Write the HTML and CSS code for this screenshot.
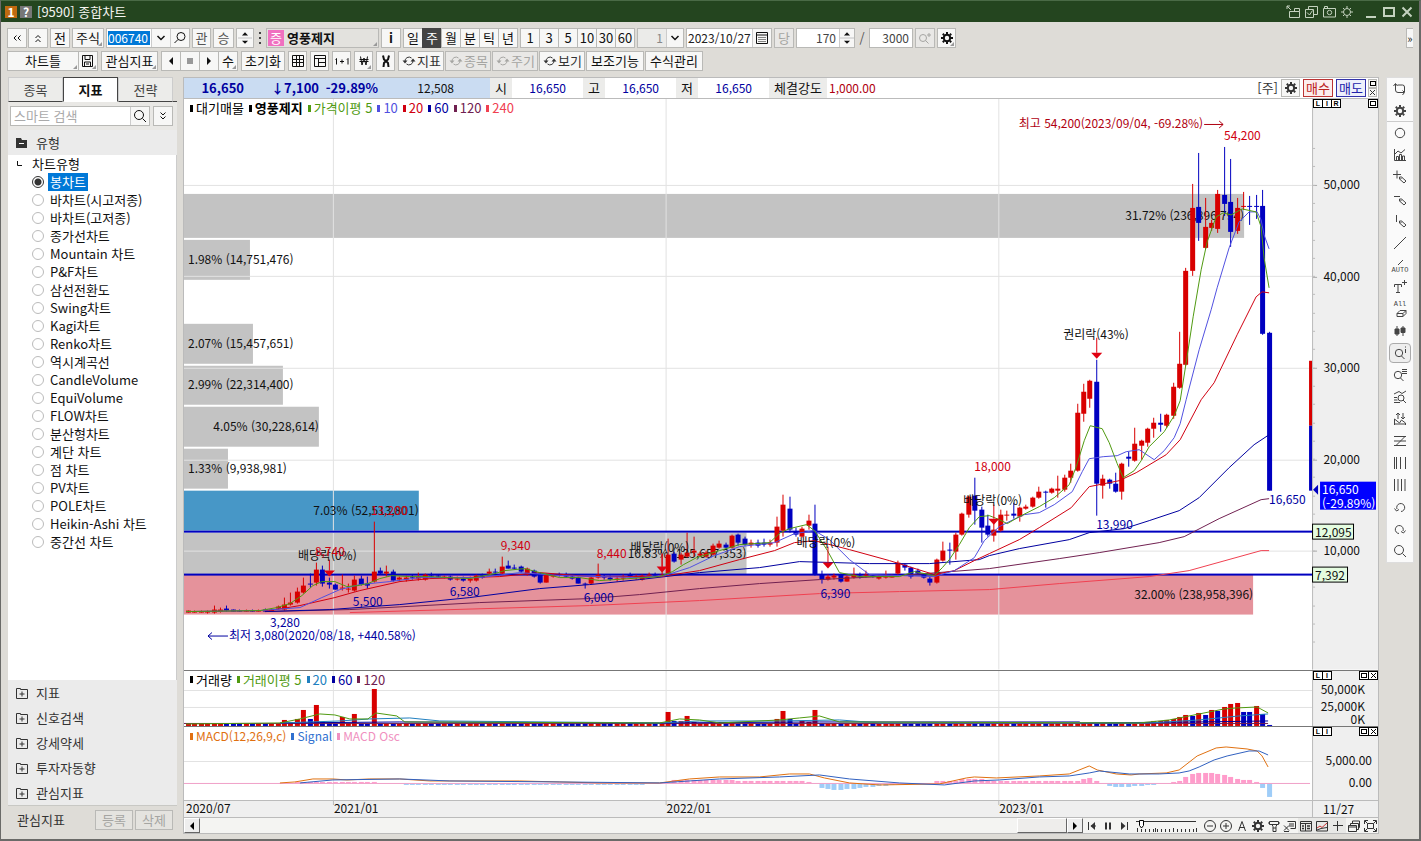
FILE: index.html
```html
<!DOCTYPE html>
<html lang="ko">
<head>
<meta charset="utf-8">
<title>[9590] 종합차트</title>
<link rel="stylesheet" href="styles.css">
</head>
<body>
<svg class="defs" aria-hidden="true">
  <symbol id="gear" viewBox="0 0 16 16"><circle cx="8" cy="8" r="3.2" fill="none" stroke="currentColor" stroke-width="2"/><path d="M8 2v2M8 12v2M2 8h2M12 8h2M3.8 3.8l1.4 1.4M10.8 10.8l1.4 1.4M12.2 3.8l-1.4 1.4M5.2 10.8l-1.4 1.4" stroke="currentColor" stroke-width="2"/></symbol>
  <symbol id="lens" viewBox="0 0 16 16"><circle cx="7" cy="7" r="4.5"/><path d="M10.5 10.5l3.5 3.5"/></symbol>
  <symbol id="lensl" viewBox="0 0 16 16"><circle cx="9" cy="6.5" r="4"/><path d="M6 9.5L2.5 13"/></symbol>
  <symbol id="cycle" viewBox="0 0 16 16"><path d="M4 8.500a4 4 0 0 1 6.500-3.500M12 7.500a4 4 0 0 1-6.500 3.500"/><path d="M1.500 7.500h5l-2.500 3zM9.500 8.500h5l-2.500-3z" fill="currentColor" stroke="none"/></symbol>
  <symbol id="pencil" viewBox="0 0 16 16"><path d="M7.500 8v2l4.500 4 2-2-4.500-4zM8 10.500l2-2"/></symbol>
  <symbol id="down" viewBox="0 0 16 16"><path d="M4.500 6l3.500 3.500L11.500 6" stroke-width="1.500"/></symbol>
  <symbol id="folder" viewBox="0 0 16 16"><path d="M2.500 3.500h4v1h7v9h-11zM8 6.500v5M5.500 9h5"/></symbol>
</svg>
<div class="window">
  <header class="titlebar">
    <span class="badge-one">1</span><span class="badge-help">?</span>
    <h1>[9590] 종합차트</h1>
    <div class="win-tools">
      <button aria-label="분리"><svg viewBox="0 0 16 16"><path d="M2 2l4 4M2 5V2h3M4.500 7.500h10v6h-10zM9.500 7.500v-3h5v3"/></svg></button>
      <button aria-label="확인"><svg viewBox="0 0 16 16"><path d="M2.500 5.500h8v8h-8zM5.500 5V2.500h9v8H11M4 8.500l2.500 2.500 3-4.500"/></svg></button>
      <button aria-label="캡처"><svg viewBox="0 0 16 16"><path d="M2.500 4.500h12v8.500h-12zM3.500 4V2.500h3V4"/><circle cx="8.500" cy="8.500" r="2.200"/></svg></button>
      <button aria-label="설정"><svg viewBox="0 0 16 16"><circle cx="8" cy="8" r="3.500"/><path d="M8 2v2.500M8 11.500V14M2 8h2.500M11.500 8H14M4 4l1.500 1.500M10.500 10.500L12 12M12 4l-1.500 1.500M5.500 10.500L4 12"/></svg></button>
      <button class="wide" aria-label="최소화"><svg viewBox="0 0 16 16"><path d="M3 13h10" stroke-width="2"/></svg></button>
      <button aria-label="최대화"><svg viewBox="0 0 16 16"><path d="M3 4h10v8H3z" stroke-width="2"/></svg></button>
      <button aria-label="닫기"><svg viewBox="0 0 16 16"><path d="M3.500 3.500l9 9M12.500 3.500l-9 9" stroke-width="2"/></svg></button>
    </div>
  </header>

  <div class="toolbars">
    <div class="bar bar-top">
      <div class="pair"><button class="sq" aria-label="이전"><svg viewBox="0 0 16 16"><path d="M7.500 5.500L5 8l2.500 2.500M11.500 5.500L9 8l2.500 2.500"/></svg></button><button class="sq" aria-label="접기"><svg viewBox="0 0 16 16"><path d="M5.500 8L8 5.500 10.500 8M5.500 12L8 9.500l2.500 2.500"/></svg></button></div>
      <button class="sq">전</button>
      <button class="w32 drop">주식</button>
      <div class="field code"><input aria-label="종목코드" value="006740"><button class="in19"><svg viewBox="0 0 16 16"><use href="#down"/></svg></button><button class="in19"><svg viewBox="0 0 16 16"><use href="#lensl"/></svg></button></div>
      <button class="w19 dim">관</button>
      <button class="w21 dim">승</button>
      <button class="spin bordered" aria-label="증감"><svg viewBox="0 0 16 20"><path d="M4.500 7L8 3.500 11.500 7zM4.500 13L8 16.500 11.500 13z" fill="currentColor" stroke="none"/><path d="M0 10h16" stroke="#bbb"/></svg></button>
      <span class="dots" aria-hidden="true"><i></i><i></i><i></i></span>
      <button class="stock drop"><em>증</em><b>영풍제지</b></button>
      <button class="sq"><b>i</b></button>
      <div class="seg"><button>일</button><button class="on">주</button><button>월</button><button>분</button><button>틱</button><button>년</button></div>
      <div class="seg"><button>1</button><button>3</button><button>5</button><button>10</button><button>30</button><button>60</button></div>
      <div class="field unit"><input aria-label="주기" value="1"><button class="in17"><svg viewBox="0 0 16 16"><use href="#down"/></svg></button></div>
      <div class="field date"><input aria-label="날짜" value="2023/10/27"><button class="in19"><svg viewBox="0 0 16 16"><path d="M2.500 2.500h11v11h-11zM2.500 5h11"/><path d="M4.500 7.500h7M4.500 9.500h7M4.500 11.500h7" stroke-dasharray="1 1"/></svg></button></div>
      <button class="sq off">당</button>
      <div class="field count"><input aria-label="표시 개수" value="170"><button class="spin"><svg viewBox="0 0 16 20"><path d="M4.500 7L8 3.500 11.500 7zM4.500 13L8 16.500 11.500 13z" fill="currentColor" stroke="none"/><path d="M0 10h16" stroke="#bbb"/></svg></button></div>
      <span class="slash">/</span>
      <div class="field total"><input aria-label="전체 개수" value="3000"></div>
      <button class="sq off"><svg viewBox="0 0 16 16"><circle cx="6" cy="8" r="3.500"/><path d="M8.500 10.500l3 3M12 3v4M10 5h4"/></svg></button>
      <button class="w19 drop"><svg viewBox="0 0 16 16"><use href="#gear"/></svg></button>
      <button class="more">»</button>
    </div>
    <div class="bar bar-sub">
      <div class="seg"><button class="w72 drop">차트틀</button><button class="w19 drop"><svg viewBox="0 0 16 16"><path d="M2.500 2.500h10v11h-10zM5 2.500v4h5v-4M4.500 13v-4h6v4M6 11h3"/></svg></button></div>
      <button class="w57 drop">관심지표</button>
      <div class="seg flat"><button><svg viewBox="0 0 16 16"><path d="M10 4v8L6 8z" fill="currentColor" stroke="none"/></svg></button><button><svg viewBox="0 0 16 16"><path d="M5 5h6v6H5z" fill="#999" stroke="none"/></svg></button><button><svg viewBox="0 0 16 16"><path d="M6 4v8l4-4z" fill="currentColor" stroke="none"/></svg></button><button class="drop">수</button></div>
      <button class="w44">초기화</button>
      <button class="w19"><svg viewBox="0 0 16 16"><path d="M2.500 2.500h11v11h-11zM2.500 6.500h11M2.500 9.500h11M6.500 2.500v11M9.500 2.500v11"/></svg></button>
      <button class="w19"><svg viewBox="0 0 16 16"><path d="M2.500 2.500h11v11h-11zM2.500 5.500h11M6.500 5.500v8M6.500 9.500h7"/></svg></button>
      <button class="w19"><svg viewBox="0 0 16 16"><path d="M1.500 6.500l1-1v6M13 6.500l1-1v6M8 6.500v4M6 8.500h4"/></svg></button>
      <button class="w19 drop"><svg viewBox="0 0 16 16"><path d="M4.500 3.500L6 12l2-7 2 7 1.500-8.500M3.500 6.500h9M3.500 8.500h9"/></svg></button>
      <button class="w19"><svg viewBox="0 0 16 16"><path d="M5 2.500l1 4 2 1.500 2-1.500 1-4M5.500 14l.5-4 2-2 2 2 .5 4" stroke-width="2"/></svg></button>
      <div class="pair">
        <button class="w46"><svg viewBox="0 0 16 16"><use href="#cycle"/></svg>지표</button>
        <button class="w46 off"><svg viewBox="0 0 16 16"><use href="#cycle"/></svg>종목</button>
        <button class="w46 off"><svg viewBox="0 0 16 16"><use href="#cycle"/></svg>주기</button>
        <button class="w46"><svg viewBox="0 0 16 16"><use href="#cycle"/></svg>보기</button>
        <button class="w58">보조기능</button>
        <button class="w58">수식관리</button>
      </div>
    </div>
  </div>

  <main class="work">
    <aside class="side">
      <nav class="tabs"><button>종목</button><button class="active">지표</button><button>전략</button><span></span></nav>
      <div class="search">
        <div class="field find"><input aria-label="스마트 검색" placeholder="스마트 검색"><button class="in19"><svg viewBox="0 0 16 16"><use href="#lens"/></svg></button></div>
        <button class="sq" aria-label="펼치기"><svg viewBox="0 0 16 16"><path d="M5.500 4.500L8 7l2.500-2.500M5.500 8.500L8 11l2.500-2.500"/></svg></button>
      </div>
      <h2 class="group"><svg viewBox="0 0 16 16"><path d="M2 3h5l1 2h5v8H2z" fill="#333" stroke="none"/><path d="M5 8.500h5" stroke="#fff"/></svg>유형</h2>
      <div class="tree">
        <h3><svg viewBox="0 0 16 16"><path d="M8.500 5v4.500H13"/></svg>차트유형</h3>
        <div id="types" class="types"></div>
      </div>
      <div class="groups">
        <h2><svg viewBox="0 0 16 16"><use href="#folder"/></svg>지표</h2>
        <h2><svg viewBox="0 0 16 16"><use href="#folder"/></svg>신호검색</h2>
        <h2><svg viewBox="0 0 16 16"><use href="#folder"/></svg>강세약세</h2>
        <h2><svg viewBox="0 0 16 16"><use href="#folder"/></svg>투자자동향</h2>
        <h2><svg viewBox="0 0 16 16"><use href="#folder"/></svg>관심지표</h2>
      </div>
      <footer><span>관심지표</span><button class="off">등록</button><button class="off">삭제</button></footer>
    </aside>

    <section class="panel">
      <div class="quote">
        <div class="now"><b>16,650</b><b class="c2">↓7,100</b><b class="c3">-29.89%</b><span class="c4">12,508</span></div>
        <span class="k">시</span><span class="v">16,650</span>
        <span class="k">고</span><span class="v">16,650</span>
        <span class="k">저</span><span class="v">16,650</span>
        <span class="k k4">체결강도</span><span class="r">1,000.00</span>
        <div class="trade"><span>[주]</span><button class="w19 set-btn"><svg viewBox="0 0 16 16"><use href="#gear"/></svg></button><button class="buy">매수</button><button class="sell">매도</button><span class="mini2"><button aria-label="확대"><i class="box"></i></button><button aria-label="닫기"><svg viewBox="0 0 7 7"><path d="M1 1l5 5M6 1L1 6"/></svg></button></span></div>
      </div>

      <div class="pane">
        <svg id="price" viewBox="184 99 1195 571"></svg>
        <div class="legend"><span style="--c:#000">대기매물</span><span style="--c:#000"><b>영풍제지</b></span><span style="--c:#4f9a10">가격이평 5</span><span style="--c:#5050e0">10</span><span style="--c:#d00010">20</span><span style="--c:#0000a0">60</span><span style="--c:#702050">120</span><span style="--c:#f04050">240</span></div>
        <div class="tags"><button>L</button><button>I</button><button>R</button></div>
        <div class="tags end"><button aria-label="확대"><i class="box"></i></button></div>
      </div>
      <div class="pane">
        <svg id="volume" viewBox="184 671 1195 56"></svg>
        <div class="legend"><span style="--c:#000">거래량</span><span style="--c:#4f9a10">거래이평 5</span><span style="--c:#2080c0">20</span><span style="--c:#0000a0">60</span><span style="--c:#702050">120</span></div>
        <div class="tags"><button>L</button><button>I</button></div>
        <div class="tags end"><button aria-label="확대"><i class="box"></i></button><button aria-label="닫기"><svg viewBox="0 0 7 7"><path d="M1 1l5 5M6 1L1 6"/></svg></button></div>
      </div>
      <div class="pane light">
        <svg id="macd" viewBox="184 728 1195 73"></svg>
        <div class="legend small"><span style="--c:#e07010">MACD(12,26,9,c)</span><span style="--c:#3070d0">Signal</span><span style="--c:#f090c0">MACD Osc</span></div>
        <div class="tags"><button>L</button><button>I</button></div>
        <div class="tags end"><button aria-label="확대"><i class="box"></i></button><button aria-label="닫기"><svg viewBox="0 0 7 7"><path d="M1 1l5 5M6 1L1 6"/></svg></button></div>
      </div>
      <div class="pane light"><svg id="dates" viewBox="184 802 1195 16"></svg></div>

      <div class="bottom">
        <div class="scroll"><button aria-label="왼쪽"><svg viewBox="0 0 16 16"><path d="M10 4v8L6 8z" fill="currentColor" stroke="none"/></svg></button><span class="track"><span class="thumb"></span></span><button aria-label="오른쪽"><svg viewBox="0 0 16 16"><path d="M6 4v8l4-4z" fill="currentColor" stroke="none"/></svg></button></div>
        <div class="player">
          <button><svg viewBox="0 0 16 16"><path d="M4.500 4v8M7 8h5"/><path d="M11 4v8L6.500 8z" fill="currentColor" stroke="none"/></svg></button>
          <button><svg viewBox="0 0 16 16"><path d="M6 4.500v7M10 4.500v7" stroke-width="2"/></svg></button>
          <button><svg viewBox="0 0 16 16"><path d="M11.500 4v8"/><path d="M5 4v8l4.500-4z" fill="currentColor" stroke="none"/></svg></button>
        </div>
        <svg class="slider" viewBox="0 0 62 14"><path d="M0 3.500h60"/><path d="M1 12.500h60" stroke-dasharray="1 3" stroke-width="3"/><path d="M1.500 10v4M19.500 10v4M37.500 10v4M60.500 10v4"/><path d="M3.500 2.500h4v5l-2 2.500-2-2.500z" fill="#fff" stroke="#000"/></svg>
        <div class="zoomers">
          <button><svg viewBox="0 0 16 16"><circle cx="8" cy="8" r="5.500"/><path d="M5 8h6"/></svg></button>
          <button><svg viewBox="0 0 16 16"><circle cx="8" cy="8" r="5.500"/><path d="M5 8h6M8 5v6"/></svg></button>
          <button><svg viewBox="0 0 16 16"><path d="M4.500 13L8 3.500 11.500 13M5.500 9.500h5"/></svg></button>
          <button><svg viewBox="0 0 16 16"><use href="#gear"/></svg></button>
          <button><svg viewBox="0 0 16 16"><path d="M3.500 3.500h9v3h-9zM3.500 5H2M12.500 5H14M6 6.500l1 2v5h3v-5l1-2M7 10h3"/></svg></button>
          <button><svg viewBox="0 0 16 16"><path d="M5.500 3.500h8v7h-5M7 6h5M7 8h5M2 7.500l5 5M7 7.500l-5 5M2 13.500h5"/></svg></button>
          <button class="set"><svg viewBox="0 0 16 16"><path d="M2.500 3.500h11v9.500h-11zM2.500 5.500h11M7.500 5.500V13"/><path d="M4 8h2M4 10.500h2M9 8h3M9 10.500h3" stroke-width="1.500"/></svg></button>
          <button class="set"><svg viewBox="0 0 16 16"><path d="M2.500 3.500h11v9.500h-11z"/><path d="M3 10l3-2 2 1.500 5-4.500" stroke="#c33"/><path d="M3 12l4-1.500 6-1" /></svg></button>
          <button class="set"><svg viewBox="0 0 16 16"><path d="M7.500 3v10M3 7.500h10"/></svg></button>
          <button><svg viewBox="0 0 16 16"><path d="M2.500 7.500h8v6h-8zM2.500 9h8M4.500 7V5.500h8v6H11M6.500 5V3h7v6.500h-1"/></svg></button>
          <button><svg viewBox="0 0 16 16"><path d="M5.500 5.500h6v5h-6zM2.500 6V2.500H6M11 2.500h3.500V6M14.500 10v3.500H11M6 13.500H2.500V10M3 3l2.500 2.500M14 3l-2.500 2.500M3 13l2.500-2.500M14 13l-2.500-2.500"/></svg></button>
        </div>
      </div>
    </section>

    <nav class="tools" aria-label="그리기 도구">
      <button><svg viewBox="0 0 16 16"><path d="M3.500 3v6q0 2.500 2.500 2.500h6M1.500 5l2-2.500 2 2.500M10.500 9.500l2 2-2 2.500M5.500 4h5q2 0 2 2v5"/></svg></button>
      <button class="last"><svg viewBox="0 0 16 16"><use href="#gear"/></svg></button>
      <button><svg viewBox="0 0 16 16"><circle cx="8" cy="8" r="4.700"/></svg></button>
      <button><svg viewBox="0 0 16 16"><path d="M2.500 2v11.500H14M4.500 13V9.500h2V13M7.500 13V7.500h2V13M10.500 13V9h2v4M3 7l3-3 3 2 4-3.500"/></svg></button>
      <button><svg viewBox="0 0 16 16"><path d="M5 1.500v8M1 5.500h8"/><use href="#pencil"/></svg></button>
      <button><svg viewBox="0 0 16 16"><path d="M2 5.500h6"/><use href="#pencil"/></svg></button>
      <button><svg viewBox="0 0 16 16"><path d="M4.500 2v7"/><use href="#pencil"/></svg></button>
      <button><svg viewBox="0 0 16 16"><path d="M2 14L14 2"/></svg></button>
      <button class="lbl"><svg viewBox="0 0 16 10"><path d="M6 9l5-5"/></svg><span>AUTO</span></button>
      <button><svg viewBox="0 0 16 16"><path d="M2.500 8V5.500h7V8M6 5.500v8M4 13.500h4M12.500 1v5M10 3.500h5"/></svg></button>
      <button class="lbl all"><span>All</span><svg viewBox="0 0 16 10"><path d="M5 5.500h6v3H5zM5 5.500l3-3h6l-3 3M14 2.500v3l-3 3"/></svg></button>
      <button><svg viewBox="0 0 16 16"><path d="M5 3v10M11 3v10"/><path d="M3 6h4v5H3zM9 5h4v4.500H9z" fill="currentColor"/></svg></button>
      <button class="pressed"><svg viewBox="0 0 16 16"><circle cx="7" cy="8" r="3.700"/><path d="M9.500 11l3 3M13.500 1.500v1M13.500 4v4"/></svg></button>
      <button><svg viewBox="0 0 16 16"><circle cx="6" cy="8" r="3.700"/><path d="M8.500 11l3 3M10 2.500h5M10 4.500h5M10 6.500h5"/></svg></button>
      <button><svg viewBox="0 0 16 16"><circle cx="9" cy="9" r="3"/><path d="M11 11l3 3M2 5l5-2.500 3 2 4-2.500M2 8.500h3M2 11h3.500M2 13.500h6"/></svg></button>
      <button><svg viewBox="0 0 16 16"><path d="M2.500 14V8l5 4 2-3 4 3v2M6 8V2M4 4l2-2 2 2M11 2v6M9 6l2 2 2-2M3 13h11"/></svg></button>
      <button><svg viewBox="0 0 16 16"><path d="M2 3.500h12M2 8h12M2 12.500h12M13 3.500L4 12.500"/></svg></button>
      <button><svg viewBox="0 0 16 16"><path d="M2.500 2v12M4.500 2v12M8.500 2v12M13.500 2v12"/></svg></button>
      <button><svg viewBox="0 0 16 16"><path d="M2.500 2v12M6 2v12M9.500 2v12M13 2v12"/></svg></button>
      <button><svg viewBox="0 0 16 16"><path d="M5 10a4 4 0 1 1 4 2.500M2.500 9.500l2 2.500 2.500-1.500"/></svg></button>
      <button><svg viewBox="0 0 16 16"><path d="M11 10a4 4 0 1 0-4 2.500M13.500 9.500l-2 2.500-2.500-1.500"/></svg></button>
      <button><svg viewBox="0 0 16 16"><use href="#lens"/></svg></button>
    </nav>
  </main>
</div>
<script src="chart.js"></script>
</body>
</html>
```

FILE: styles.css
```css
* { box-sizing: border-box; }
body {
  margin: 0;
  font: 13px/18px "Noto Sans CJK KR", sans-serif;
  color: #111;
  background: #dedcd7;
}
button, input { font: inherit; color: inherit; margin: 0; padding: 0; border-radius: 0; }
button { background: #f7f7f6; border: 1px solid #b9b9b6; display: inline-flex; align-items: center; justify-content: center; white-space: nowrap; position: relative; line-height: 16px; }
h1, h2, h3 { margin: 0; font: inherit; }
svg { display: block; fill: none; stroke: currentColor; }
svg text { stroke: none; font-size: 12px; }
button svg, h2 svg, h3 svg { width: 16px; height: 16px; flex: none; }
.defs { position: absolute; width: 0; height: 0; }

.window { min-height: 100vh; display: flex; flex-direction: column; border: 1px solid #6a6a68; border-top-color: #4a6a46; border-right-width: 2px; border-bottom-width: 2px; }
.titlebar { height: 21px; background: #24451f; color: #fff; display: flex; align-items: center; padding: 0 4px; gap: 3px; flex: none; }
.titlebar h1 { color: #f4f4f0; margin-left: 2px; }
.badge-one, .badge-help { width: 12px; height: 12px; line-height: 12px; text-align: center; background: #c06a10; font-weight: bold; font-size: 12px; }
.badge-help { background: #777; }
.win-tools { margin-left: auto; display: flex; gap: 2px; color: #c4d2bf; }
.win-tools button { background: none; border: 0; width: 16px; height: 16px; }
.win-tools .wide { margin-left: 6px; }

.toolbars { padding: 6px 6px 0; display: flex; flex-direction: column; gap: 3px; flex: none; }
.bar { display: flex; align-items: center; height: 20px; }
.bar-top { gap: 2px; }
.bar-sub { gap: 3px; }
.bar button { height: 20px; }
.pair { display: flex; gap: 1px; }
.sq { width: 20px; height: 20px; }
.w19 { width: 19px; } .w21 { width: 21px; } .w32 { width: 32px; } .w44 { width: 44px; }
.w46 { width: 46px; } .w57 { width: 57px; } .w58 { width: 58px; } .w72 { width: 72px; }
.w46 { color: #333; }
.dim { color: #555; }
.off { color: #a5a5a2; background: #e9e8e6; }
.drop::after { content: ""; position: absolute; right: 1px; bottom: 1px; border: 2px solid transparent; border-right-color: #999; border-bottom-color: #999; }
.field { display: flex; border: 1px solid #b9b9b6; height: 20px; background: #fff; }
.field input { border: 0; flex: 1; min-width: 0; background: none; padding: 0 3px; outline: 0; text-align: right; color: #444; font-size: 12px; }
.field button, .bar .field button { border: 0; border-left: 1px solid #ccc; height: 18px; flex: none; }
.in19 { width: 19px; } .in17 { width: 17px; } .spin { width: 15px; }
.spin svg { width: 14px; height: 18px; }
.bordered { width: 18px; }
.code { width: 84px; }
.code input { background: #0078d7; color: #fff; text-align: left; margin: 2px 1px; padding: 0; }
.unit { width: 47px; } .unit input { background: #ebebe9; color: #888; }
.date { width: 86px; } .date input { text-align: left; color: #222; padding: 0 0 0 1px; }
.count { width: 59px; } .total { width: 44px; }
.slash { width: 10px; text-align: center; color: #555; }
.dots { width: 8px; display: flex; flex-direction: column; gap: 3px; align-items: center; }
.dots i { width: 2px; height: 2px; background: #444; }
.stock { width: 113px; justify-content: flex-start; gap: 3px; background: #e3e2de; padding-left: 1px; }
.stock em { font-style: normal; background: #f070c0; color: #fff; width: 16px; line-height: 16px; }
.more { width: 7px; margin-left: auto; border-right: 0; font-size: 11px; }
.seg { display: flex; }
.seg button { width: 20px; margin-right: -1px; }
.seg button:last-child { margin-right: 0; }
.seg .w72 { width: 72px; }
.seg .on { background: #444; color: #fff; border-color: #444; }

.work { flex: 1; display: flex; padding: 6px 5px 5px 7px; min-height: 0; align-items: stretch; }
.side { width: 169px; flex: none; margin-right: 6px; display: flex; flex-direction: column; }
.tabs { display: flex; height: 25px; }
.tabs button { width: 55px; border: 1px solid #ccc; border-bottom-color: #444; background: #ececea; color: #444; }
.tabs .active { background: #fff; border-color: #444; border-bottom-color: #fff; color: #111; font-weight: bold; }
.tabs span { flex: 1; border-bottom: 1px solid #444; }
.search { display: flex; gap: 3px; padding: 4px 2px; background: #e9e8e5; }
.find { flex: 1; min-width: 0; } .find input { text-align: left; font-size: 13px; } .find input::placeholder { color: #aaa; }
.search .sq { margin-right: 2px; flex: none; }
.group, .groups h2 { display: flex; align-items: center; gap: 6px; height: 25px; padding-left: 6px; background: #ebebeb; color: #333; }
.tree { background: #fff; flex: 1; border-right: 1px solid #ccc; }
.tree h3 { display: flex; align-items: center; height: 18px; gap: 7px; padding-left: 1px; }
.types { display: flex; flex-direction: column; }
.types label { display: flex; align-items: center; height: 18px; padding-left: 24px; gap: 4px; }
.types input { appearance: none; width: 12px; height: 12px; border: 1px solid #bbb; border-radius: 50%; background: #fff; }
.types input:checked { border-color: #333; background: radial-gradient(#333 0 3px, #fff 4px); }
.types span { padding: 0 2px; line-height: 18px; }
.types input:checked + span { background: #0078d7; color: #fff; }
.side footer { height: 29px; display: flex; align-items: center; gap: 2px; padding: 0 4px 0 9px; background: #dedcd7; border-top: 1px solid #c8c8c4; color: #333; }
.side footer span { flex: 1; }
.side footer button { width: 38px; height: 20px; background: #e4e3df; }

.panel { flex: 1; min-width: 0; border: 1px solid #bbb; margin-right: 7px; background: #fff; display: flex; flex-direction: column; }
.quote { height: 21px; display: flex; align-items: stretch; line-height: 20px; border-bottom: 1px solid #bbb; color: #0000a0; flex: none; }
.now { display: flex; width: 306px; background: #cadcf2; text-align: right; }
.now b { width: 60px; } .now .c2 { width: 75px; } .now .c3 { width: 59px; } .now .c4 { width: 76px; color: #111; }
.c4, .v, .r { font-size: 12px; }
.k { width: 22px; background: #ececea; color: #111; text-align: center; }
.k4 { width: 58px; }
.v { width: 71px; padding-right: 17px; text-align: right; }
.r { color: #b00010; padding-left: 2px; }
.trade { margin-left: auto; display: flex; gap: 2px; align-items: center; color: #333; padding-right: 1px; }
.trade .set-btn, .trade .buy, .trade .sell { height: 18px; margin-left: 1px; }
.trade .buy, .trade .sell { width: 30px; border-color: #b33; color: #b22; background: #fceeee; }
.trade .sell { border-color: #33a; color: #22a; background: #eef0fc; }
.mini2 { display: flex; flex-direction: column; }
.mini2 button { width: 9px; height: 9px; }
.mini2 svg, .tags svg { width: 7px; height: 7px; }

.pane { position: relative; border-bottom: 1px solid #777; }
.light { border-color: #bbb; }
.pane > svg { width: 100%; height: auto; }
.legend { position: absolute; left: 6px; top: 0; display: flex; gap: 5px; }
.legend span { color: var(--c); display: flex; align-items: center; gap: 3px; }
.legend span::before { content: ""; width: 3px; height: 7px; background: var(--c); }
.small { font-size: 12px; }
.tags { position: absolute; right: 36px; top: 0; display: flex; width: 29px; color: #000; }
.tags.end { right: 0; width: auto; }
.tags button { width: 10px; height: 9px; border: 1px solid #000; background: #fff; font: bold 7px/7px "Liberation Sans", sans-serif; margin-right: -1px; }
.tags.end button:last-child { margin-right: 0; }
.box { width: 6px; height: 5px; border: 1px solid #000; }

.bottom { display: flex; height: 15px; background: #f4f4f2; color: #333; overflow: hidden; }
.bottom button { height: 15px; width: 16px; }
.scroll { flex: 1; display: flex; }
.scroll button { background: #eee; border-color: #fff #666 #666 #fff; color: #000; }
.track { flex: 1; display: flex; justify-content: flex-end; }
.thumb { width: 50px; background: #eeedeb; border: 1px solid; border-color: #fff #666 #666 #fff; }
.player, .zoomers { display: flex; }
.player button, .zoomers button { border: 0; background: none; }
.zoomers .set { background: #e8e8e6; }
.player { padding-left: 1px; }
.slider { width: 62px; height: 14px; margin: 0 4px; }

.tools { width: 28px; flex: none; align-self: flex-start; display: flex; flex-direction: column; background: #fafafa; border: 1px solid #ddd; color: #444; }
.tools button { border: 0; background: none; height: 22px; }
.tools .last { border-bottom: 1px solid #ccc; }
.tools .pressed { border: 1px solid #aaa; border-radius: 4px; background: #eee; margin: 1px 2px; height: 20px; }
.tools .lbl { flex-direction: column; font: 7px/8px "Liberation Mono", monospace; }
.tools .lbl svg { height: 10px; }
```

FILE: chart.js
```js
// Chart-type radio list
const types = ["봉차트", "바차트(시고저종)", "바차트(고저종)", "종가선차트", "Mountain 차트", "P&F차트", "삼선전환도", "Swing차트", "Kagi차트", "Renko차트", "역시계곡선", "CandleVolume", "EquiVolume", "FLOW차트", "분산형차트", "계단 차트", "점 차트", "PV차트", "POLE차트", "Heikin-Ashi 차트", "중간선 차트"];
const list = document.getElementById("types");
types.forEach((name, i) => {
  const label = document.createElement("label");
  const radio = document.createElement("input");
  radio.type = "radio";
  radio.name = "type";
  radio.checked = i === 0;
  const text = document.createElement("span");
  text.textContent = name;
  label.append(radio, text);
  list.append(label);
});

const RED = "#d80000", BLUE = "#0000c0", GRID = "#e2e2e2";
const X0 = 188, STEP = 6.4, EDGE = 1313;
const xs = i => Math.round(X0 + STEP * i);
const rect = (x, y, w, h, f) => `<rect x="${x}" y="${y}" width="${w}" height="${h}" fill="${f}" stroke="none"/>`;
const line = (pts, c, w = 1) => `<polyline points="${pts}" stroke="${c}" stroke-width="${w}"/>`;
const text = (x, y, s, c = "#111", anchor = "start") => `<text x="${x}" y="${y}" fill="${c}" text-anchor="${anchor}">${s}</text>`;
const axis = (y, h) => rect(EDGE, y, 67, h, "#efefef") + rect(EDGE, y, 1, h, "#bbb");
const verticals = (y, h) => [333, 666, 999].map(x => rect(x, y, 1, h, GRID)).join("");

// color, high, body top, body bottom, low
const candles = `r611,611,613,613 r611,612,613,613 r611,612,613,613 r611,612,613,614 r606,610,613,614 r608,610,612,613 b606,609,611,612 b610,610,612,612 b610,611,612,612 r610,611,612,612 b610,611,612,612 r610,611,612,612 b609,610,612,612 r609,610,612,612 r606,607,609,610
r598,605,610,611 r593,603,605,606 r588,592,603,604 r578,586,593,594 b574,584,585,588 r563,570,583,586 b566,570,584,587 b578,583,585,589 b584,585,590,590 r575,588,589,591 r584,589,590,593 r576,580,591,592 b576,579,585,586 b577,584,586,589 r522,572,582,583 b568,571,574,575 r566,572,574,577 b570,572,581,582
r577,578,580,582 r576,578,580,582 b575,577,578,580 r573,577,579,581 r574,575,580,581 b573,576,577,578 b575,576,577,578 r576,577,578,579 b576,577,580,581 r577,579,580,581 b577,579,581,582 r577,579,581,583 r575,576,581,582 b574,576,578,579 r569,572,574,575 b569,572,573,576 r557,567,574,575 b561,566,569,569 b565,568,569,570 b566,567,572,573
r568,569,575,576 b570,571,577,578 b573,574,583,584 r574,575,583,583 r574,575,577,578 b573,575,576,577 b573,575,577,578 b575,577,579,580 b577,578,584,584 b583,584,585,589 r577,578,584,585 r564,575,578,579 b575,577,578,580 b576,578,580,581 r577,579,580,582 r575,578,579,581 b573,575,577,578 r575,577,578,580 r575,576,580,581 r573,575,576,578 b573,575,576,577 r554,575,576,577
r539,555,574,575 b552,554,562,563 r553,555,560,565 r533,553,557,558 r537,551,553,557 r552,554,556,557 r551,553,557,558 r544,546,555,556 r541,544,548,549 b543,545,548,549 r535,536,548,549 b534,535,543,546 b537,539,545,546 r540,543,545,548 b540,543,546,548 b539,543,545,547 r540,543,545,547
r517,527,543,547 r495,505,531,537 b497,509,530,533 b528,532,535,537 r527,529,537,538 r515,521,526,530 b505,524,575,576 b571,575,580,584 r575,577,580,581 r574,576,578,580 b574,575,582,583 r576,577,582,582 r568,575,578,579 b573,576,577,579 r571,575,576,578 b575,576,577,578 r576,577,579,580 r571,577,578,579 r575,576,578,578 r561,563,574,575
b564,565,568,571 b567,568,577,579 b569,571,574,575 b574,575,578,579 b577,579,583,586 r559,560,583,584 r542,551,561,562 b543,550,551,565 r533,535,552,560 r513,514,535,536 r496,497,515,518 b478,496,511,525 b507,510,528,543 b515,526,535,537 r520,530,536,542 r510,515,531,532 r511,515,516,521 b503,514,516,519 r507,508,517,522 r505,507,509,510 r497,498,507,508
r487,492,498,499 b491,492,493,508 r488,489,493,494 r476,489,491,498 r475,478,490,492 r464,471,478,483 r404,413,471,472 r384,392,414,422 r380,381,399,408 b360,382,484,516 r475,479,486,499 b479,480,484,489 b473,484,492,493 r463,464,492,500 b452,457,459,467 r428,444,461,462 r440,441,446,460 r428,429,443,447 r418,423,429,438 b414,423,425,432
r414,415,426,428 r383,387,416,419 r332,364,388,389 r268,271,365,366 r184,208,271,276 b153,207,223,241 r198,227,248,249 r220,223,228,231 r190,194,229,233 b147,195,204,216 b159,202,232,247 r198,208,231,234 r192,206,207,210 b196,206,207,225 b195,206,207,219 b190,206,334,335 b332,333,491,491`
  .split(/\s+/).map(s => ({ up: s[0] === "r", v: s.slice(1).split(",").map(Number) }));

const bands = [
  [194, 44, 1245, "31.72% (236,896,794)"], [240, 40, 250, "1.98% (14,751,476)"], [324, 40, 253, "2.07% (15,457,651)"],
  [366, 39, 283, "2.99% (22,314,400)"], [407, 40, 319, "4.05% (30,228,614)"], [449, 40, 228, "1.33% (9,938,981)"],
  [491, 40, 419, "7.03% (52,513,801)", "#4797c7"], [533, 42, 747, "16.83% (125,657,353)"], [575, 40, 1254, "32.00% (238,958,396)", "#e5929b"]
];

const averages = [
  ["#f04050", "350,613 590,606 700,601 820,594 900,592 990,590 1060,584 1150,577 1190,571 1262,551 1270,551"],
  ["#702050", "265,612 350,610 480,603 590,599 640,595 700,589 760,584 820,580 900,576 990,569 1060,559 1100,553 1160,543 1185,537 1220,519 1262,500 1270,499"],
  ["#0000a0", "265,612 330,610 400,605 470,598 540,589 590,585 640,580 700,573 760,568 800,562 870,564 930,564 980,560 990,556 1020,549 1070,540 1090,533 1125,529 1150,521 1180,511 1200,498 1230,468 1255,445 1270,435"],
  ["#d00010", "186,612 270,611 300,606 335,598 360,591 400,582 430,579 500,577 540,573 590,577 660,577 700,571 740,560 775,551 795,543 815,541 850,550 890,561 935,575 955,571 975,561 990,554 1020,540 1040,528 1072,508 1090,487 1120,481 1137,473 1167,455 1181,440 1202,400 1215,383 1238,335 1257,297 1263,292 1270,293"],
  ["#5050e0", "186,612 260,611 300,608 322,598 340,590 360,585 390,582 420,578 480,578 520,573 560,576 640,578 665,576 690,568 715,556 740,547 775,543 795,534 815,531 830,540 850,560 870,575 935,577 955,571 975,558 985,541 1000,527 1014,520 1025,515 1040,513 1055,505 1073,492 1083,472 1090,459 1104,457 1118,456 1127,452 1140,450 1155,460 1165,451 1175,438 1181,424 1187,400 1200,350 1212,310 1218,288 1230,248 1240,222 1250,212 1258,212 1262,220 1265,235 1270,249"],
  ["#4f9a10", "186,612 260,611 277,608 290,604 302,596 313,586 322,582 335,582 347,587 358,586 368,584 380,579 392,576 410,577 430,577 470,579 495,574 505,571 525,569 540,573 560,578 580,578 600,581 660,577 673,572 684,565 697,558 720,551 740,545 770,543 781,533 790,529 807,525 815,531 828,551 840,573 860,577 900,577 915,572 935,576 943,568 950,560 960,545 970,528 980,517 990,516 1000,520 1008,524 1020,517 1040,507 1055,498 1070,485 1077,467 1085,441 1091,426 1103,429 1110,443 1118,464 1124,478 1135,471 1142,461 1150,447 1165,432 1175,416 1181,401 1187,363 1194,317 1202,270 1208,242 1217,217 1224,213 1232,215 1243,209 1257,212 1262,227 1265,258 1270,288"]
];

// Price pane
let s = bands.map(b => rect(184, b[0], b[2] - 184, b[1], b[4] || "#c3c3c3")).join("");
s += verticals(99, 571) + [185, 276, 368, 460, 551].map(y => rect(184, y, 1129, 1, GRID)).join("");
s += bands.map(b => b[2] > 300 ? text(b[2], b[0] + b[1] / 2 + 4, b[3], "#111", "end") : text(188, b[0] + b[1] / 2 + 4, b[3])).join("");
s += rect(184, 531, 1129, 2, BLUE) + rect(184, 574, 1129, 2, BLUE);
candles.forEach((c, i) => {
  const x = xs(i), f = c.up ? RED : BLUE, [h, t, b, l] = c.v;
  s += rect(x, h, 1, l - h, f) + rect(x - 2, t, 5, b - t, f);
});
s += averages.map(a => line(a[1], a[0])).join("");
[[329, 560, 571], [662, 554, 567], [828, 547, 563], [994, 505, 519], [1097, 338, 353]].forEach(([x, a, b]) => {
  s += rect(x, a, 1, b - a, "#e00010") + `<path d="M${x - 5} ${b}h11l-5.5 6z" fill="#e00010" stroke="none"/>`;
});
[[298, 560, "배당락(0%)"], [631, 552, "배당락(0%)"], [797, 547, "배당락(0%)"], [964, 505, "배당락(0%)"], [1064, 339, "권리락(43%)"]].forEach(a => s += text(...a));
[[315, 556, "8,740"], [371, 515, "13,200"], [501, 550, "9,340"], [597, 558, "8,440"], [975, 471, "18,000"], [1225, 140, "54,200"]].forEach(([x, y, t]) => s += text(x, y, t, "#d00010"));
[[270, 627, "3,280"], [353, 606, "5,500"], [450, 596, "6,580"], [584, 602, "6,000"], [821, 598, "6,390"], [1097, 529, "13,990"], [1270, 504, "16,650"]].forEach(([x, y, t]) => s += text(x, y, t, "#0000a0"));
s += text(1204, 128, "최고 54,200(2023/09/04, -69.28%)", "#b00010", "end") + line("1205,124.5 1224,124.5", "#b00010") + line("1220,121 1224,124.5 1220,128", "#b00010");
s += text(229, 640, "최저 3,080(2020/08/18, +440.58%)", "#0000a0") + line("208,636.5 228,636.5", "#0000a0") + line("212,633 208,636.5 212,640", "#0000a0");
s += rect(1310, 361, 3, 65, RED) + rect(1310, 426, 3, 65, BLUE);
s += axis(99, 571);
[[189, "50,000"], [281, "40,000"], [372, "30,000"], [464, "20,000"], [555, "10,000"]].forEach(([y, t]) => s += text(1361, y, t, "#111", "end") + rect(1314, y - 4, 4, 1, "#aaa"));
for (let y = 148; y < 660; y += 18.3) s += rect(1314, Math.round(y), 2, 1, "#bbb");
s += rect(1321, 482, 56, 28, "#0000ff") + text(1323, 494, "16,650", "#fff") + text(1323, 508, "(-29.89%)", "#fff") + `<path d="M1314 490l5-5v10z" fill="${BLUE}" stroke="none"/>`;
s += `<rect x="1313.5" y="524.5" width="41" height="15" fill="#e4fce0" stroke="#000"/><rect x="1313.5" y="567.5" width="35" height="15" fill="#e4fce0" stroke="#000"/>`;
s += text(1316, 537, "12,095") + text(1316, 580, "7,392");
document.getElementById("price").innerHTML = s;

// Volume pane; bar heights by candle index, all others are two units tall
const vol = { 15: 6, 16: 4, 17: 7, 18: 16, 19: 7, 20: 21, 21: 4, 22: 3, 24: 9, 25: 3, 26: 12, 29: 37, 75: 14, 76: 5, 77: 5, 78: 10, 79: 4, 82: 4, 85: 4, 92: 7, 93: 15, 94: 7, 96: 5, 97: 4, 98: 16, 150: 4, 151: 5, 152: 5, 153: 6, 154: 7, 155: 9, 156: 11, 157: 10, 158: 13, 159: 11, 160: 16, 161: 15, 162: 19, 163: 22, 164: 23, 165: 14, 166: 14, 167: 20, 168: 12, 169: 1 };
const volBlue = [157, 159, 161, 165, 166, 168, 169];
let v = verticals(671, 56) + rect(184, 690, 1129, 1, GRID) + rect(184, 707, 1129, 1, GRID);
candles.forEach((c, i) => {
  const h = vol[i] || 2;
  const f = i >= 98 && i in vol ? (volBlue.includes(i) ? BLUE : RED) : c.up ? RED : BLUE;
  v += rect(xs(i) - 2, 726 - h, 5, h, f);
});
v += line("184,723.5 1269,723.5", "#702050") + line("280,723 400,722 660,723 820,722 1080,722 1082,723 1200,722 1269,721", "#0000a0");
v += line("280,723 340,721 370,719 410,718 440,721 660,723 700,721 780,721 840,720 880,723 1150,723 1200,720 1240,716 1269,714", "#2080c0");
v += line("186,724 280,723 300,719 320,714 335,715 350,719 368,719 376,713 397,716 405,722 660,723 680,719 700,720 720,723 780,720 800,718 820,716 840,722 1140,723 1170,720 1200,714 1225,709 1237,708 1258,707 1269,713", "#4f9a10");
v += axis(671, 56) + text(1366, 694, "50,000K", "#111", "end") + text(1366, 711, "25,000K", "#111", "end") + text(1366, 724, "0K", "#111", "end");
document.getElementById("volume").innerHTML = v;

// MACD pane
const osc = { 140: 4, 141: 5, 142: 2, 154: 1, 155: 2, 156: 6, 157: 9, 158: 10, 159: 10, 160: 10, 161: 9, 162: 8, 163: 6, 164: 4, 165: 3, 166: 3, 167: 1, 168: -4, 169: -13, 144: -2, 145: -3, 146: -3, 147: -3, 148: -2, 149: -2, 150: -1, 151: -1, 97: 1, 99: -4, 100: -5, 101: -6, 102: -6, 103: -5, 104: -5, 105: -4, 106: -3, 107: -3, 108: -2, 109: -2, 110: -1 };
for (let i = 17; i < 30; i++) osc[i] = 1;
for (let i = 34; i < 72; i++) osc[i] = -1;
for (let i = 76; i < 97; i++) osc[i] = i < 86 ? 3 : 2;
for (let i = 117; i < 140; i++) osc[i] = i > 120 && i < 125 ? 4 : 2;
let m = verticals(728, 73) + rect(184, 762, 1129, 1, GRID) + rect(184, 784, 1127, 1, "#f0a0c8");
for (const i in osc) m += osc[i] > 0 ? rect(xs(+i) - 2, 784 - osc[i], 5, osc[i], "#ff9ccb") : rect(xs(+i) - 2, 785, 5, -osc[i], "#9fcdf8");
m += line("280,784 295,783 313,780 333,780 347,781 370,780 400,780 430,782 520,782 600,784 660,784 690,780 720,778 760,778 790,775 810,775 825,779 850,784 880,786 940,785 967,779 975,778 997,779 1040,777 1070,775 1090,767 1098,771 1117,775 1132,776 1140,775 1167,774 1180,771 1198,757 1217,749 1227,748 1248,750 1258,752 1263,757 1269,768", "#e07010");
m += line("300,784 333,781 400,780 450,782 560,783 660,784 720,780 780,778 820,776 850,780 900,784 945,786 975,782 1000,781 1040,778 1070,777 1090,774 1100,772 1130,775 1160,775 1180,774 1190,772 1200,768 1215,761 1228,757 1250,752 1260,752 1269,756", "#3060c0");
m += axis(728, 73) + text(1373, 766, "5,000.00", "#111", "end") + text(1373, 788, "0.00", "#111", "end");
document.getElementById("macd").innerHTML = m;

// Date axis
document.getElementById("dates").innerHTML = rect(184, 802, 1196, 16, "#efefef") + [333, 666, 999].map(x => rect(x, 802, 1, 4, "#bbb")).join("") + rect(EDGE, 802, 1, 16, "#bbb") +
  text(186, 814, "2020/07") + text(334, 814, "2021/01") + text(667, 814, "2022/01") + text(1000, 814, "2023/01") + text(1324, 815, "11/27");
```
